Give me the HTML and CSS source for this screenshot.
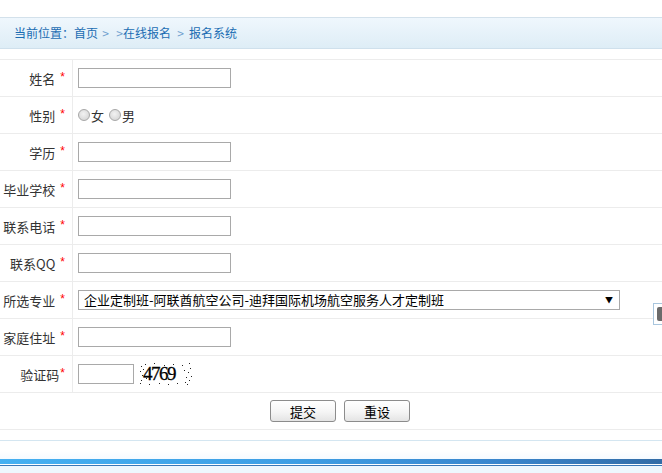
FILE: index.html
```html
<!DOCTYPE html>
<html lang="zh-CN">
<head>
<meta charset="utf-8">
<title>报名系统</title>
<link rel="stylesheet" href="styles.css">
</head>
<body>
<div class="crumb">当前位置：首页<span class="gt g1">&gt;</span><span class="gt g2">&gt;</span>在线报名<span class="gt g3">&gt;</span>报名系统</div>

<form class="form">
  <div class="row">
    <div class="label">姓名<span class="star">*</span></div>
    <div class="field"><input class="text" type="text"></div>
  </div>
  <div class="row">
    <div class="label">性别<span class="star">*</span></div>
    <div class="field"><span class="radio"></span>女 <span class="radio r2"></span>男</div>
  </div>
  <div class="row">
    <div class="label">学历<span class="star">*</span></div>
    <div class="field"><input class="text" type="text"></div>
  </div>
  <div class="row">
    <div class="label">毕业学校<span class="star">*</span></div>
    <div class="field"><input class="text" type="text"></div>
  </div>
  <div class="row">
    <div class="label">联系电话<span class="star">*</span></div>
    <div class="field"><input class="text" type="text"></div>
  </div>
  <div class="row">
    <div class="label">联系QQ<span class="star">*</span></div>
    <div class="field"><input class="text" type="text"></div>
  </div>
  <div class="row">
    <div class="label">所选专业<span class="star">*</span></div>
    <div class="field">
      <span class="selwrap">
        <select class="sel"><option>企业定制班-阿联酋航空公司-迪拜国际机场航空服务人才定制班</option></select>
        <span class="arrow">▼</span>
      </span>
    </div>
  </div>
  <div class="row">
    <div class="label">家庭住址<span class="star">*</span></div>
    <div class="field"><input class="text" type="text"></div>
  </div>
  <div class="row">
    <div class="label">验证码<span class="star tight">*</span></div>
    <div class="field">
      <input class="text code" type="text">
      <span class="captcha">
        <svg class="noise" width="52" height="22" viewBox="0 0 52 22">
          <g fill="#222">
            <rect x="1" y="3" width="1" height="1"/><rect x="0" y="8" width="1" height="1"/><rect x="2" y="12" width="1" height="1"/><rect x="1" y="17" width="1" height="1"/><rect x="0" y="20" width="1" height="1"/>
            <rect x="5" y="1" width="1" height="1"/><rect x="9" y="21" width="1" height="1"/><rect x="14" y="0" width="1" height="1"/><rect x="19" y="20" width="1" height="1"/>
            <rect x="24" y="2" width="1" height="1"/><rect x="28" y="21" width="1" height="1"/><rect x="33" y="1" width="1" height="1"/><rect x="37" y="20" width="1" height="1"/>
            <rect x="42" y="2" width="1" height="1"/><rect x="45" y="19" width="1" height="1"/><rect x="49" y="0" width="1" height="1"/><rect x="50" y="5" width="1" height="1"/>
            <rect x="48" y="9" width="1" height="1"/><rect x="51" y="13" width="1" height="1"/><rect x="49" y="17" width="1" height="1"/><rect x="47" y="21" width="1" height="1"/>
            <rect x="3" y="6" width="1" height="1"/><rect x="44" y="7" width="1" height="1"/><rect x="6" y="15" width="1" height="1"/><rect x="46" y="14" width="1" height="1"/>
          </g>
        </svg>
        <span class="digits">4769</span>
      </span>
    </div>
  </div>
  <div class="row actions">
    <button type="button" class="btn">提交</button>
    <button type="reset" class="btn">重设</button>
  </div>
</form>

<div class="foot">
  <div class="footline"></div>
  <div class="footgap"></div>
  <div class="bluebar"></div>
  <div class="whiteline"></div>
  <div class="darkline"></div>
  <div class="pale"></div>
</div>

<div class="float"><span class="float-in"></span></div>
</body>
</html>
```

FILE: styles.css
```css
html, body {
  margin: 0;
  padding: 0;
  width: 662px;
  height: 473px;
  overflow: hidden;
  background: #fff;
  font-family: "Noto Sans CJK SC", "Liberation Sans", sans-serif;
}

.crumb {
  margin-top: 17px;
  height: 30px;
  line-height: 30px;
  border-top: 1px solid #d3e1eb;
  border-bottom: 1px solid #cfe0ec;
  background: linear-gradient(#eff7fd, #deedf6);
  padding-left: 14px;
  font-size: 12px;
  color: #1b6db3;
  white-space: nowrap;
}

.crumb .gt {
  display: inline-block;
  width: 7px;
  text-align: center;
  color: #6f9fcf;
}

.crumb .g1 {
  margin-left: 4px;
}

.crumb .g2 {
  margin-left: 7px;
}

.crumb .g3 {
  margin: 0 5px 0 6px;
}

.form {
  margin: 10px 0 0;
  width: 680px;
  border-top: 1px solid #ececec;
}

.row {
  display: grid;
  grid-template-columns: 73px 1fr;
  height: 36px;
  border-bottom: 1px solid #ececec;
}

.label {
  box-sizing: border-box;
  border-right: 1px solid #ececec;
  display: flex;
  align-items: center;
  justify-content: flex-end;
  padding-right: 7px;
  font-size: 13px;
  color: #333;
  white-space: pre;
}

.star {
  color: #f00;
  font-family: "Liberation Sans", sans-serif;
  font-size: 12px;
  margin-left: 5px;
  position: relative;
  top: -1px;
}

.star.tight {
  margin-left: 1px;
}

.field {
  display: flex;
  align-items: center;
  padding-left: 5px;
  font-size: 13px;
  color: #333;
}

.text {
  box-sizing: border-box;
  width: 153px;
  height: 20px;
  margin: 0;
  padding: 0 2px;
  border: 1px solid #a9a9a9;
  background: #fff;
  font-size: 13px;
}

.text.code {
  width: 56px;
}

.radio {
  box-sizing: border-box;
  display: inline-block;
  width: 12px;
  height: 12px;
  border-radius: 50%;
  border: 1px solid #a7a7a7;
  background: radial-gradient(circle at 45% 40%, #f2f2f2, #cfcfcf);
  margin-right: 1px;
}

.radio.r2 {
  margin-left: 5px;
}

.selwrap {
  position: relative;
  display: inline-block;
  width: 542px;
  height: 20px;
}

.sel {
  -webkit-appearance: none;
  appearance: none;
  box-sizing: border-box;
  width: 542px;
  height: 20px;
  margin: 0;
  padding: 0 0 0 5px;
  border: 1px solid #a9a9a9;
  border-radius: 0;
  background: #fff;
  font-family: "Noto Sans CJK SC", "Liberation Sans", sans-serif;
  font-size: 13px;
  line-height: 18px;
  color: #000;
}

.arrow {
  position: absolute;
  right: 7px;
  top: 4px;
  font-size: 8px;
  line-height: 12px;
  color: #000;
  pointer-events: none;
}

.captcha {
  position: relative;
  display: inline-flex;
  align-items: center;
  width: 52px;
  height: 22px;
  margin-left: 6px;
}

.noise {
  position: absolute;
  left: 0;
  top: 0;
}

.digits {
  position: relative;
  margin-left: 3px;
  font-family: "Liberation Serif", serif;
  font-size: 19px;
  color: #000;
  letter-spacing: -1.5px;
  line-height: 22px;
  -webkit-text-stroke: 0.3px #000;
}

.actions {
  display: flex;
  justify-content: center;
  align-items: center;
  gap: 8px;
}

.btn {
  box-sizing: border-box;
  width: 66px;
  height: 22px;
  margin: 0;
  padding: 0;
  border: 1px solid #8c8c8c;
  border-radius: 3px;
  background: linear-gradient(#ffffff, #f5f5f5 55%, #e4e4e4);
  font-family: "Noto Sans CJK SC", "Liberation Sans", sans-serif;
  font-size: 13px;
  color: #000;
}

.foot {
  margin-top: 10px;
}

.footline {
  height: 1px;
  background: #d4e6f1;
}

.footgap {
  height: 18px;
  background: linear-gradient(#fff 55%, #f5faff);
}

.bluebar {
  height: 5px;
  background: linear-gradient(90deg, #45b0f1, #3e9ee4 45%, #3a86cd 75%, #336ca6);
}

.whiteline {
  height: 1px;
  background: #fff;
}

.darkline {
  height: 1px;
  background: #3a78b8;
}

.pale {
  height: 8px;
  background: #eef7fd;
}

.float {
  position: absolute;
  left: 653px;
  top: 303px;
  width: 24px;
  height: 22px;
  box-sizing: border-box;
  border: 1px solid #a9c6de;
  background: #fff;
}

.float-in {
  position: absolute;
  left: 3px;
  top: 3px;
  width: 7px;
  height: 14px;
  background: #6b6b6b;
  border-radius: 2px;
}
```
